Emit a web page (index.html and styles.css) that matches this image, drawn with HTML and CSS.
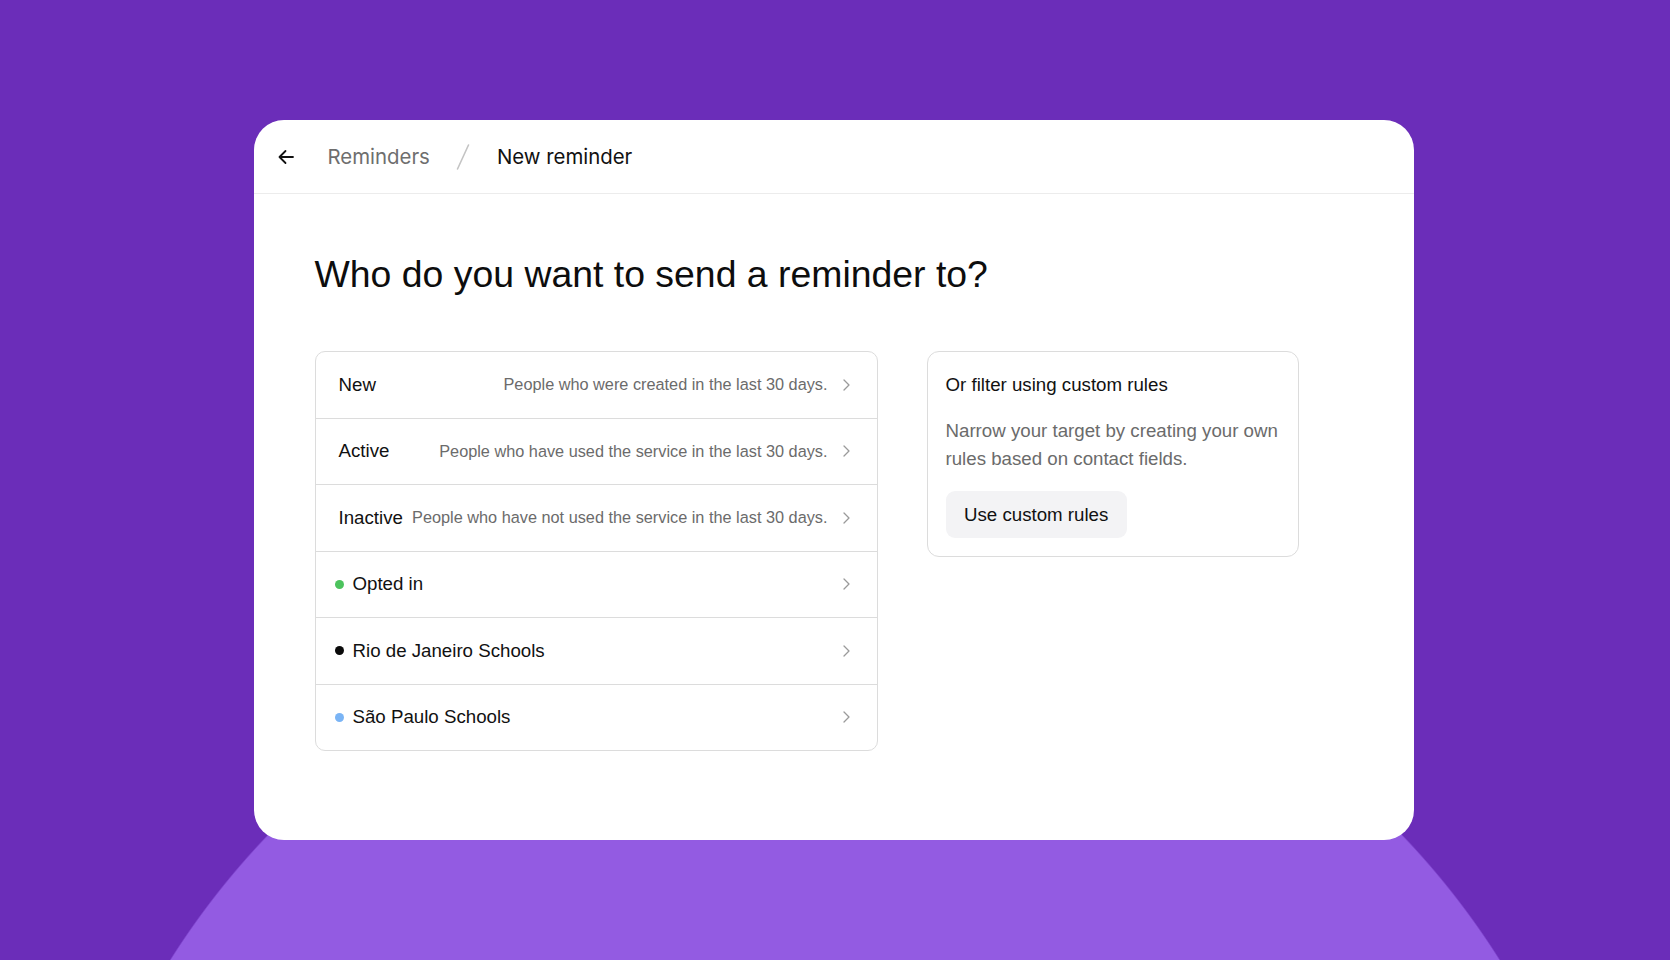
FILE: index.html
```html
<!DOCTYPE html>
<html lang="en">
<head>
<meta charset="utf-8">
<title>New reminder</title>
<link rel="stylesheet" href="styles.css">
</head>
<body>
<div class="stage">
  <div class="card">
    <header class="topbar">
      <button class="back" aria-label="Back">
        <svg width="16" height="16" viewBox="0 0 16 16" fill="none" stroke="#111" stroke-width="1.8" stroke-linecap="round" stroke-linejoin="round"><path d="M15 8H1.5M7.5 2 1.5 8l6 6"/></svg>
      </button>
      <nav class="crumbs">
        <span class="crumb muted">Reminders</span>
        <svg class="sep" width="14" height="26" viewBox="0 0 14 26" fill="none" stroke="#c4c4c4" stroke-width="1.6" stroke-linecap="round"><path d="M12.5 1 1.5 25"/></svg>
        <span class="crumb">New reminder</span>
      </nav>
    </header>
    <main class="content">
      <h1 class="title">Who do you want to send a reminder to?</h1>
      <div class="columns">
        <ul class="list">
          <li class="row"><span class="label">New</span><span class="desc">People who were created in the last 30 days.</span><svg class="chev" width="7" height="12" viewBox="0 0 7 12" fill="none" stroke="#9a9a9a" stroke-width="1.3" stroke-linecap="round" stroke-linejoin="round"><path d="M1 1l5 5-5 5"/></svg></li>
          <li class="row"><span class="label">Active</span><span class="desc">People who have used the service in the last 30 days.</span><svg class="chev" width="7" height="12" viewBox="0 0 7 12" fill="none" stroke="#9a9a9a" stroke-width="1.3" stroke-linecap="round" stroke-linejoin="round"><path d="M1 1l5 5-5 5"/></svg></li>
          <li class="row"><span class="label">Inactive</span><span class="desc">People who have not used the service in the last 30 days.</span><svg class="chev" width="7" height="12" viewBox="0 0 7 12" fill="none" stroke="#9a9a9a" stroke-width="1.3" stroke-linecap="round" stroke-linejoin="round"><path d="M1 1l5 5-5 5"/></svg></li>
          <li class="row"><span class="dot green"></span><span class="label">Opted in</span><svg class="chev" width="7" height="12" viewBox="0 0 7 12" fill="none" stroke="#9a9a9a" stroke-width="1.3" stroke-linecap="round" stroke-linejoin="round"><path d="M1 1l5 5-5 5"/></svg></li>
          <li class="row"><span class="dot black"></span><span class="label">Rio de Janeiro Schools</span><svg class="chev" width="7" height="12" viewBox="0 0 7 12" fill="none" stroke="#9a9a9a" stroke-width="1.3" stroke-linecap="round" stroke-linejoin="round"><path d="M1 1l5 5-5 5"/></svg></li>
          <li class="row"><span class="dot blue"></span><span class="label">São Paulo Schools</span><svg class="chev" width="7" height="12" viewBox="0 0 7 12" fill="none" stroke="#9a9a9a" stroke-width="1.3" stroke-linecap="round" stroke-linejoin="round"><path d="M1 1l5 5-5 5"/></svg></li>
        </ul>
        <section class="custom">
          <h2 class="custom-title">Or filter using custom rules</h2>
          <p class="custom-text">Narrow your target by creating your own rules based on contact fields.</p>
          <button class="btn">Use custom rules</button>
        </section>
      </div>
    </main>
  </div>
</div>
</body>
</html>
```
FILE: styles.css
```css
* { box-sizing: border-box; }
html, body { margin: 0; padding: 0; }
body {
  width: 1670px;
  height: 960px;
  overflow: hidden;
  background: radial-gradient(circle 786px at 835px 1379px, #935be2 785px, #6b2db9 786.5px);
  font-family: "Liberation Sans", Arial, sans-serif;
  color: #111;
}
.stage {
  padding-top: 120px;
  padding-right: 3px;
  display: flex;
  justify-content: center;
}
.card {
  width: 1160px;
  height: 720px;
  background: #fff;
  border-radius: 30px;
  overflow: hidden;
}
.topbar {
  height: 74px;
  border-bottom: 1px solid #ececec;
  display: flex;
  align-items: center;
  padding-left: 24px;
}
.back {
  border: 0;
  background: none;
  padding: 0;
  width: 16px;
  height: 16px;
  display: flex;
  margin-right: 34px;
}
.crumbs {
  display: flex;
  align-items: center;
  font-family: Inter, "Noto Sans", sans-serif;
  font-size: 20.4px;
  color: #111;
}
.crumb.muted { color: #6e6e6e; }
.sep {
  margin: 0 27px 0 26px;
  flex: none;
}
.content {
  padding: 58px 61px 0;
}
.title {
  margin: 0;
  font-size: 37.4px;
  line-height: 44px;
  font-weight: 400;
  color: #0d0d0d;
}
.columns {
  display: flex;
  align-items: flex-start;
  gap: 49px;
  margin-top: 55px;
}
.list {
  list-style: none;
  margin: 0;
  padding: 0;
  width: 563px;
  border: 1px solid #dcdcdc;
  border-radius: 10px;
}
.row {
  height: 66.5px;
  display: flex;
  align-items: center;
  padding: 0 27px 0 23px;
  border-top: 1px solid #dcdcdc;
}
.row:first-child { border-top: 0; height: 65.5px; }
.label {
  font-size: 18.7px;
  color: #111;
  white-space: nowrap;
}
.desc {
  margin-left: auto;
  font-size: 16.3px;
  color: #6b6b6b;
  white-space: nowrap;
  padding-left: 9px;
}
.chev {
  margin-left: 15px;
  flex: none;
}
.row .dot + .label { margin-right: auto; }
.dot {
  width: 9px;
  height: 9px;
  border-radius: 50%;
  margin-right: 9px;
  margin-left: -4px;
  flex: none;
}
.dot.green { background: #4cc35d; }
.dot.black { background: #0a0a0a; }
.dot.blue { background: #7ab4f5; }
.custom {
  width: 372px;
  border: 1px solid #dcdcdc;
  border-radius: 12px;
  padding: 21px 18px 18px;
}
.custom-title {
  margin: 0;
  font-size: 18.7px;
  font-weight: 400;
  line-height: 24px;
  color: #111;
}
.custom-text {
  margin: 20px 0 19px;
  font-size: 18.7px;
  line-height: 27.7px;
  color: #6b6b6b;
}
.btn {
  display: block;
  border: 0;
  background: #f3f3f5;
  border-radius: 9px;
  height: 47px;
  padding: 0 18.5px;
  font-family: "Liberation Sans", Arial, sans-serif;
  font-size: 18.7px;
  color: #111;
}
```
